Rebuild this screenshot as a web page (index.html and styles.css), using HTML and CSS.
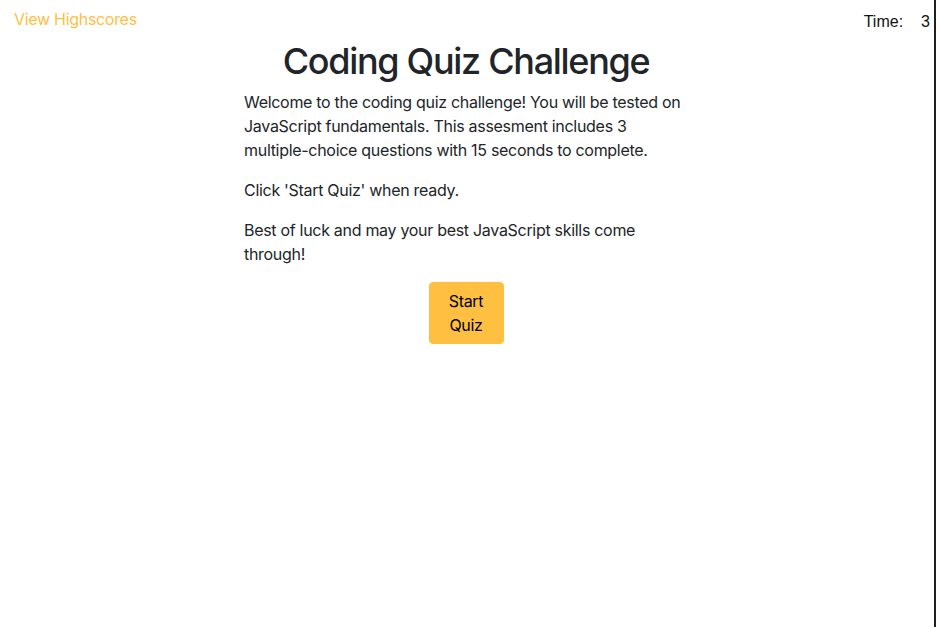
FILE: index.html
```html
<!DOCTYPE html>
<html lang="en">
<head>
<meta charset="utf-8">
<title>Coding Quiz Challenge</title>
<link rel="stylesheet" href="styles.css">
</head>
<body>
<div class="frame">
  <header class="topbar">
    <a class="highscores" href="#">View Highscores</a>
    <div class="timer"><span>Time:</span><span class="time-value">3</span></div>
  </header>
  <main class="quiz">
    <h1 class="title">Coding Quiz Challenge</h1>
    <div class="intro">
      <p>Welcome to the coding quiz challenge! You will be tested on JavaScript fundamentals. This assesment includes 3 multiple-choice questions with 15 seconds to complete.</p>
      <p>Click 'Start Quiz' when ready.</p>
      <p>Best of luck and may your best JavaScript skills come through!</p>
      <div class="actions">
        <button class="start-btn" type="button">Start Quiz</button>
      </div>
    </div>
  </main>
</div>
</body>
</html>
```
FILE: styles.css
```css
* { box-sizing: border-box; }
html, body { margin: 0; padding: 0; height: 100%; }
body {
  font-family: Inter, "Noto Sans", "Liberation Sans", sans-serif;
  font-size: 16px;
  line-height: 24px;
  letter-spacing: -0.3px;
  color: #212529;
  background: #fff;
}
.frame {
  min-height: 100%;
  width: 936px;
  padding-right: 2px;
  border-right: 2px solid #1f1f1f;
}
.topbar {
  display: flex;
  justify-content: space-between;
  align-items: flex-start;
  padding: 7px 0 0 14px;
}
.highscores {
  color: #ffc03f;
  text-decoration: none;
}
.timer {
  display: flex;
  gap: 18px;
  padding-top: 3px;
  margin-right: 2px;
  font-family: "Liberation Sans", Arial, sans-serif;
  letter-spacing: 0;
  color: #111;
}
.quiz {
  display: flex;
  flex-direction: column;
  align-items: center;
}
.title {
  margin: 6px 0 7px;
  font-size: 36px;
  line-height: 43px;
  font-weight: 500;
  letter-spacing: -1.3px;
  text-align: center;
}
.intro {
  width: 444px;
}
.intro p { margin: 0 0 16px; }
.actions {
  display: flex;
  justify-content: center;
}
.start-btn {
  width: 75px;
  padding: 6px 12px;
  font: inherit;
  letter-spacing: inherit;
  color: #000;
  background: #ffbf40;
  border: 1px solid #ffbf40;
  border-radius: 4px;
}
```
